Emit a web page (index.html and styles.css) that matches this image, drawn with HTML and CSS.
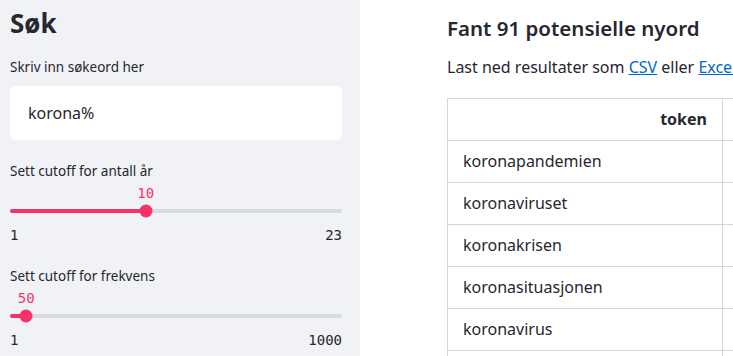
FILE: index.html
```html
<!DOCTYPE html>
<html lang="no">
<head>
    <meta charset="UTF-8">
    <meta name="viewport" content="width=device-width, initial-scale=1.0">
    <title>Nyordsøk</title>
    <link rel="stylesheet" href="styles.css">
</head>
<body>
    <div class="app">
        <aside class="sidebar">
            <h1>Søk</h1>
            <label class="widget-label" for="query">Skriv inn søkeord her</label>
            <input class="text-input" id="query" type="text" value="korona%">

            <div class="slider-widget">
                <div class="widget-label">Sett cutoff for antall år</div>
                <div class="slider">
                    <div class="slider-value-row">
                        <span class="slider-value" style="left: 40.9%">10</span>
                    </div>
                    <div class="slider-track">
                        <div class="slider-fill" style="width: 40.9%"></div>
                        <div class="slider-thumb" style="left: 40.9%"></div>
                    </div>
                    <div class="slider-ticks">
                        <span>1</span>
                        <span>23</span>
                    </div>
                </div>
            </div>

            <div class="slider-widget">
                <div class="widget-label">Sett cutoff for frekvens</div>
                <div class="slider">
                    <div class="slider-value-row">
                        <span class="slider-value" style="left: 4.9%">50</span>
                    </div>
                    <div class="slider-track">
                        <div class="slider-fill" style="width: 4.9%"></div>
                        <div class="slider-thumb" style="left: 4.9%"></div>
                    </div>
                    <div class="slider-ticks">
                        <span>1</span>
                        <span>1000</span>
                    </div>
                </div>
            </div>
        </aside>

        <main class="main">
            <h2>Fant 91 potensielle nyord</h2>
            <p class="download">Last ned resultater som <a href="#">CSV</a> eller <a href="#">Excel</a></p>

            <table class="results">
                <colgroup>
                    <col class="col-token">
                    <col class="col-rest">
                </colgroup>
                <thead>
                    <tr>
                        <th>token</th>
                        <th></th>
                    </tr>
                </thead>
                <tbody>
                    <tr><td>koronapandemien</td><td></td></tr>
                    <tr><td>koronaviruset</td><td></td></tr>
                    <tr><td>koronakrisen</td><td></td></tr>
                    <tr><td>koronasituasjonen</td><td></td></tr>
                    <tr><td>koronavirus</td><td></td></tr>
                    <tr><td>koronatiltak</td><td></td></tr>
                </tbody>
            </table>
        </main>
    </div>
</body>
</html>
```

FILE: styles.css
```css
body {
    margin: 0;
    font-family: "Noto Sans", sans-serif;
    color: #262730;
    background: #fff;
    overflow: hidden;
}
.app {
    display: flex;
    height: 100vh;
}

/* Sidebar */
.sidebar {
    flex: 0 0 360px;
    box-sizing: border-box;
    padding: 0 18px 0 10px;
    background: #f0f2f6;
    display: flex;
    flex-direction: column;
}
.sidebar h1 {
    margin: 6px 0 0;
    font-size: 26px;
    line-height: 34px;
    font-weight: 700;
}
.widget-label {
    display: block;
    font-size: 13.5px;
    line-height: 20px;
}
.sidebar h1 + .widget-label {
    margin-top: 17px;
}
.text-input {
    margin-top: 9px;
    height: 54px;
    box-sizing: border-box;
    border: 0;
    border-radius: 5px;
    padding: 0 18px;
    background: #fff;
    font-family: inherit;
    font-size: 16px;
    color: #262730;
    outline: none;
}
.slider-widget {
    margin-top: 21px;
}
.slider {
    margin-top: 2px;
}
.slider-value-row {
    position: relative;
    height: 20px;
}
.slider-value {
    position: absolute;
    top: 0;
    transform: translateX(-50%);
    font-family: "DejaVu Sans Mono", monospace;
    font-size: 14px;
    line-height: 20px;
    color: #f63366;
}
.slider-track {
    position: relative;
    height: 4px;
    margin-top: 6px;
    border-radius: 2px;
    background: #d5dae5;
}
.slider-fill {
    height: 100%;
    border-radius: 2px;
    background: #f63366;
}
.slider-thumb {
    position: absolute;
    top: 50%;
    width: 13px;
    height: 13px;
    border-radius: 50%;
    background: #f63366;
    transform: translate(-50%, -50%);
}
.slider-ticks {
    display: flex;
    justify-content: space-between;
    margin-top: 12px;
    font-family: "DejaVu Sans Mono", monospace;
    font-size: 14px;
    line-height: 20px;
}

/* Main */
.main {
    flex: 1;
    min-width: 0;
    padding: 12px 0 0 87px;
    overflow: hidden;
}
.main h2 {
    margin: 0;
    font-size: 20.5px;
    line-height: 32px;
    font-weight: 600;
    white-space: nowrap;
}
.download {
    margin: 11px 0 0;
    font-size: 16px;
    line-height: 24px;
    white-space: nowrap;
}
.download a {
    color: #0068c9;
    text-decoration: underline;
}
.results {
    margin-top: 19px;
    border-collapse: collapse;
    table-layout: fixed;
    width: 475px;
    font-size: 16px;
    white-space: nowrap;
}
.col-token {
    width: 275px;
}
.col-rest {
    width: 200px;
}
.results th,
.results td {
    border: 1px solid #d6d6d9;
    padding: 8px 15px 9px;
    line-height: 24px;
}
.results th {
    font-weight: 700;
    text-align: right;
}
```
